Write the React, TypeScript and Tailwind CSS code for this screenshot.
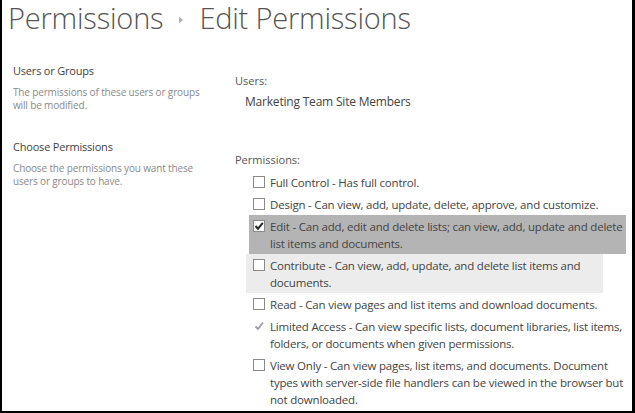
import React from "react";

interface Perm {
  name: string;
  desc: string;
  state: "off" | "on" | "dim";
  bg?: string;
}

const perms: Perm[] = [
  { name: "Full Control", desc: "Has full control.", state: "off" },
  { name: "Design", desc: "Can view, add, update, delete, approve, and customize.", state: "off" },
  { name: "Edit", desc: "Can add, edit and delete lists; can view, add, update and delete list items and documents.", state: "on", bg: "edit" },
  { name: "Contribute", desc: "Can view, add, update, and delete list items and documents.", state: "off", bg: "contrib" },
  { name: "Read", desc: "Can view pages and list items and download documents.", state: "off" },
  { name: "Limited Access", desc: "Can view specific lists, document libraries, list items, folders, or documents when given permissions.", state: "dim" },
  { name: "View Only", desc: "Can view pages, list items, and documents. Document types with server-side file handlers can be viewed in the browser but not downloaded.", state: "off" },
];

const Box = ({ state }: { state: Perm["state"] }) => {
  if (state === "dim") {
    return (
      <svg width="12" height="12" viewBox="0 0 12 12" className="shrink-0 mt-[2px]">
        <path d="M2.5 6.5 L5 9 L10 2.5" fill="none" stroke="#9a9a9a" strokeWidth="1.8" />
      </svg>
    );
  }
  return (
    <svg width="12" height="12" viewBox="0 0 12 12" className="shrink-0 mt-[2px]">
      <rect x="0.5" y="0.5" width="11" height="11" fill="#fff" stroke="#8a8a8a" />
      {state === "on" && (
        <path d="M2.5 6 L5 8.7 L9.8 2.8" fill="none" stroke="#222" strokeWidth="1.9" />
      )}
    </svg>
  );
};

export default function App() {
  return (
    <div
      className="w-[635px] h-[413px] bg-white overflow-hidden border-l-2 border-r-[3px] border-b-2 border-black text-[#444]"
      style={{ fontFamily: '"Open Sans", "Noto Sans", sans-serif' }}
    >
      <div className="flex items-center pl-[6px] leading-[36px] text-[#555] font-light text-[29px] tracking-[-0.2px]">
        <span>Permissions</span>
        <svg width="6" height="8" viewBox="0 0 6 8" className="mx-[15px] mt-[4px]">
          <path d="M1 0.5 L5 4 L1 7.5 Z" fill="#b0b0b0" />
        </svg>
        <span>Edit Permissions</span>
      </div>

      <div className="flex">
        <div className="w-[232px] pl-[11px] pt-[27px]">
          <div className="text-[11px] leading-[16px] tracking-[-0.2px] text-[#444]">Users or Groups</div>
          <div className="mt-[7px] text-[10px] leading-[13px] tracking-[-0.15px] text-[#8a8a8a] w-[200px]">
            The permissions of these users or groups will be modified.
          </div>
          <div className="mt-[27px] text-[11px] leading-[16px] tracking-[-0.2px] text-[#444]">Choose Permissions</div>
          <div className="mt-[7px] text-[10px] leading-[13px] tracking-[-0.15px] text-[#8a8a8a] w-[200px]">
            Choose the permissions you want these users or groups to have.
          </div>
        </div>

        <div className="flex-1 pt-[37px]">
          <div className="pl-[1px] text-[11px] leading-[16px] text-[#555]">Users:</div>
          <div className="mt-[4px] pl-[11px] text-[12px] leading-[17px] tracking-[-0.2px] text-[#444]">Marketing Team Site Members</div>
          <div className="mt-[42px] pl-[1px] text-[11px] leading-[16px] text-[#555]">Permissions:</div>
          <div className="mt-[3px] flex flex-col">
            {perms.map((p) => (
              <div
                key={p.name}
                className={
                  p.bg === "edit"
                    ? "flex gap-[5px] ml-[15px] pl-[4px] pt-[3px] pb-[2px] mr-[6px] bg-[#b4b4b4]"
                    : p.bg === "contrib"
                    ? "flex gap-[5px] ml-[12px] pl-[7px] pt-[3px] pb-[2px] mr-[29px] bg-[#ececec]"
                    : "flex gap-[5px] pl-[19px] pt-[3px] pb-[2px]"
                }
              >
                <Box state={p.state} />
                <div className="text-[11.5px] leading-[17px] tracking-[-0.2px] text-[#444] pr-[2px]">
                  {`${p.name} - ${p.desc}`}
                </div>
              </div>
            ))}
          </div>
        </div>
      </div>
    </div>
  );
}
